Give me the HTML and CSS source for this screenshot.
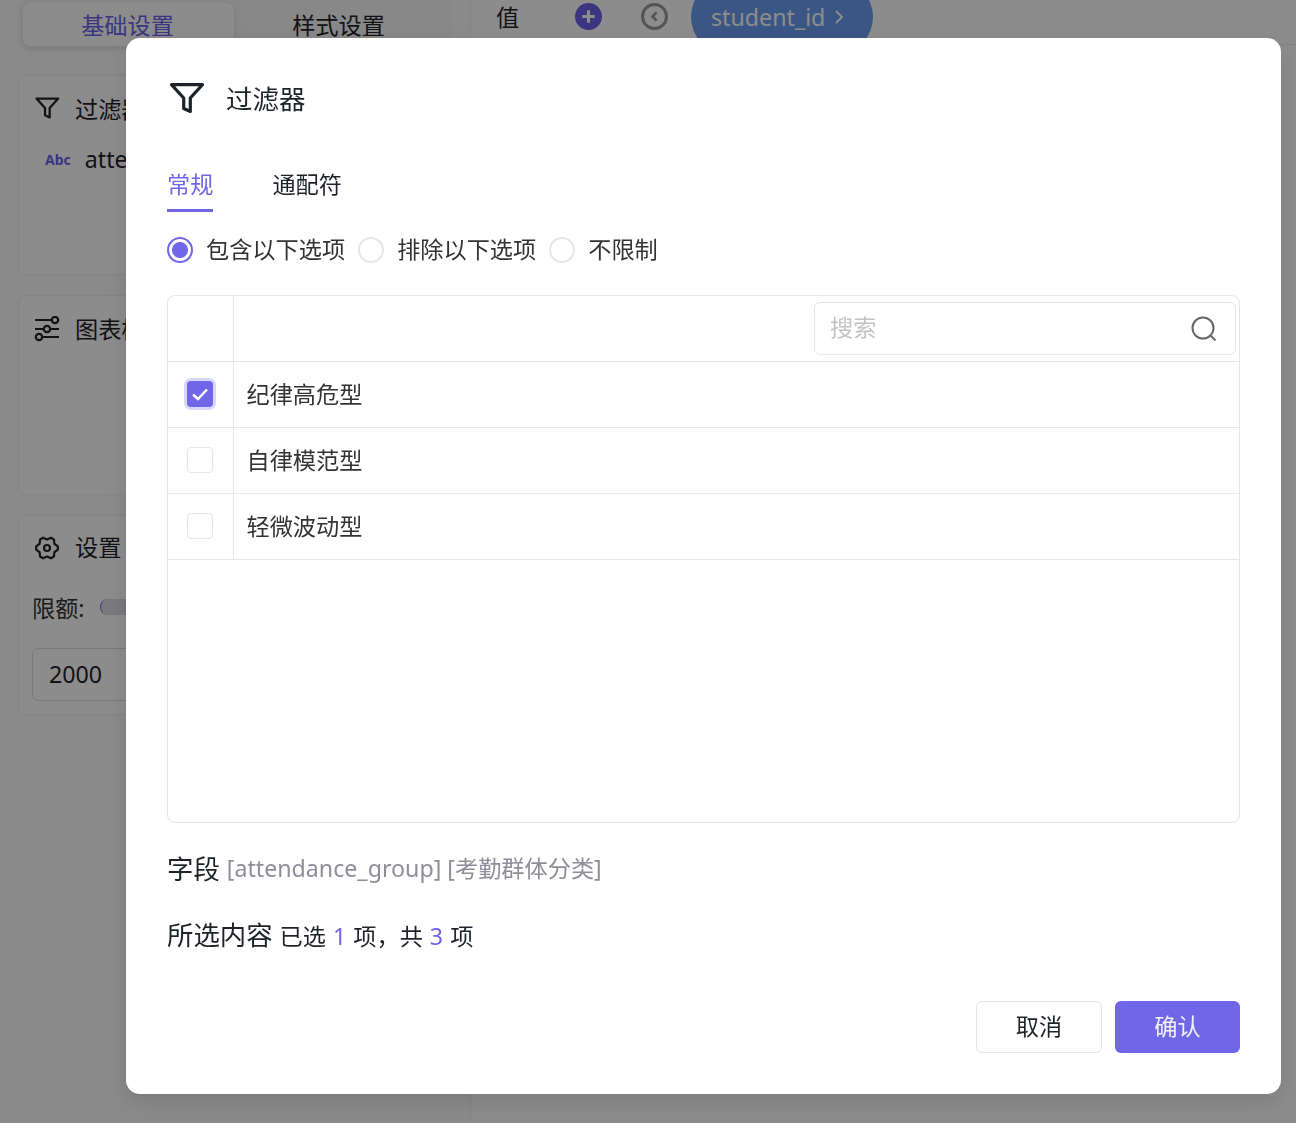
FILE: index.html
```html
<!DOCTYPE html>
<html lang="zh">
<head>
    <meta charset="UTF-8">
    <title>过滤器</title>
    <link rel="stylesheet" href="styles.css">
</head>
<body>
    <!-- Page behind the dialog -->
    <div class="app">
        <aside class="sidebar">
            <div class="side-tabs">
                <div class="side-tab active">基础设置</div>
                <div class="side-tab">样式设置</div>
            </div>
            <section class="card">
                <div class="card-head">
                    <svg class="card-icon funnel" viewBox="0 0 37 37"><polygon points="3.5 3.7 34.5 3.7 22.3 17 22.3 30.5 15.7 27.5 15.7 17"/></svg>
                    <span>过滤器</span>
                </div>
                <div class="field-row"><span class="abc">Abc</span><span>atte</span></div>
            </section>
            <section class="card">
                <div class="card-head">
                    <svg class="card-icon" viewBox="0 0 26 26"><path d="M1 4H17M1 13H9M17 13H25M9 21H25"/><circle cx="21" cy="4" r="3.2"/><circle cx="13" cy="13" r="3.2"/><circle cx="5" cy="21" r="3.2"/></svg>
                    <span>图表样式</span>
                </div>
            </section>
            <section class="card">
                <div class="card-head settings-head">
                    <svg class="card-icon" viewBox="-1 -1 26 26"><polygon points="22.86 10.28 22.86 13.72 19.36 16.25 18.92 20.55 15.94 22.27 12 20.5 8.06 22.27 5.08 20.55 4.64 16.25 1.14 13.72 1.14 10.28 4.64 7.75 5.08 3.45 8.06 1.73 12 3.5 15.94 1.73 18.92 3.45 19.36 7.75"/><circle cx="12" cy="12" r="3"/></svg>
                    <span>设置</span>
                </div>
                <div class="limit-row"><span>限额:</span><div class="switch"></div></div>
                <div class="limit-input">2000</div>
            </section>
        </aside>
        <main class="main">
            <div class="value-bar">
                <span class="value-label">值</span>
                <span class="add-btn">
                    <svg viewBox="0 0 26 26"><path d="M13 7V19M7 13H19"/></svg>
                </span>
                <span class="back-btn">
                    <svg viewBox="0 0 26 26"><path d="M15 9L11 13L15 17"/></svg>
                </span>
                <span class="pill">student_id
                    <svg viewBox="0 0 14 18"><path d="M4 3L10 9L4 15"/></svg>
                </span>
            </div>
        </main>
    </div>

    <!-- Filter dialog -->
    <div class="overlay">
        <div class="modal">
            <div class="modal-title">
                <svg class="title-icon" viewBox="0 0 37 37"><polygon points="3.5 3.7 34.5 3.7 22.3 17 22.3 30.5 15.7 27.5 15.7 17"/></svg>
                <span>过滤器</span>
            </div>

            <div class="tabs">
                <div class="tab active">常规</div>
                <div class="tab">通配符</div>
            </div>

            <div class="radios">
                <label class="radio checked"><i></i>包含以下选项</label>
                <label class="radio"><i></i>排除以下选项</label>
                <label class="radio"><i></i>不限制</label>
            </div>

            <div class="list">
                <div class="list-row">
                    <div class="check-cell"></div>
                    <div class="text-cell search-cell">
                        <div class="search">
                            <span>搜索</span>
                            <svg viewBox="0 0 26 26"><circle cx="12" cy="12" r="10.5"/><path d="M20 20L24.5 24.5"/></svg>
                        </div>
                    </div>
                </div>
                <div class="list-row">
                    <div class="check-cell">
                        <span class="checkbox checked">
                            <svg viewBox="0 0 26 26"><path d="M6 13.5L11 18L20 8.5"/></svg>
                        </span>
                    </div>
                    <div class="text-cell">纪律高危型</div>
                </div>
                <div class="list-row">
                    <div class="check-cell"><span class="checkbox"></span></div>
                    <div class="text-cell">自律模范型</div>
                </div>
                <div class="list-row">
                    <div class="check-cell"><span class="checkbox"></span></div>
                    <div class="text-cell">轻微波动型</div>
                </div>
            </div>

            <div class="info field-info">
                <span class="info-label">字段</span>
                <span class="muted">[attendance_group] [考勤群体分类]</span>
            </div>
            <div class="info selected-info">
                <span class="info-label">所选内容</span>
                <span class="count">已选 <b>1</b> 项，共 <b>3</b> 项</span>
            </div>

            <div class="actions">
                <button class="btn">取消</button>
                <button class="btn primary">确认</button>
            </div>
        </div>
    </div>
</body>
</html>
```

FILE: styles.css
```css
html, body {
    margin: 0;
    height: 100%;
    overflow: hidden;
}

body {
    font-family: "Noto Sans", "Noto Sans CJK SC", sans-serif;
    font-size: 23.2px;
    color: #1f2329;
    background-color: #fff;
}

.app {
    display: flex;
    height: 100vh;
}

/* Sidebar behind the dialog */
.sidebar {
    box-sizing: border-box;
    width: 471px;
    padding: 0 18px;
    border-right: 1px solid #eee;
    background-color: #fcfcfc;
}

.side-tabs {
    display: flex;
    height: 54px;
    margin: -4px 0 25px;
    padding: 7px 5px 4px;
    box-sizing: border-box;
    border-radius: 8px;
    background-color: #f7f7f9;
}

.side-tab {
    box-sizing: border-box;
    width: 211px;
    padding-right: 2px;
    text-align: center;
    line-height: 45px;
}

.side-tab.active {
    color: #6c63e8;
    background-color: #fff;
    border-radius: 8px;
    box-shadow: 0 3px 8px rgba(0, 0, 0, 0.1);
}

.card {
    box-sizing: border-box;
    height: 200px;
    margin-bottom: 20px;
    padding: 16px 15px;
    border: 1px solid #f0f0f0;
    border-radius: 8px;
    background-color: #fff;
}

.card-head {
    display: flex;
    align-items: center;
    gap: 15px;
    height: 34px;
}

.card-head span {
    margin-bottom: 3px;
}

.settings-head {
    margin-top: -1px;
}

.settings-head span {
    margin-bottom: 5px;
}

.card-icon {
    width: 26px;
    height: 26px;
    fill: none;
    stroke: #1f2329;
    stroke-width: 2.2;
    stroke-linejoin: round;
}

.card-icon.funnel {
    stroke-width: 3.2;
}

.field-row {
    display: flex;
    align-items: center;
    gap: 14px;
    margin: 17px 0 0 11px;
}

.abc {
    color: #6c63e8;
    font-size: 14px;
    font-weight: 700;
}

.limit-row {
    display: flex;
    align-items: center;
    gap: 15px;
    margin: 25px 0 0 -2px;
    color: #333;
}

.switch {
    width: 60px;
    height: 16px;
    border-left: 1px solid #6c63e8;
    border-radius: 8px;
    background-color: #dedee6;
}

.limit-input {
    box-sizing: border-box;
    height: 53px;
    margin-top: 24px;
    margin-left: -2px;
    padding-left: 16px;
    line-height: 51px;
    border: 1px solid #ddd;
    border-radius: 6px;
}

/* Top bar behind the dialog */
.main {
    flex: 1;
}

.value-bar {
    display: flex;
    align-items: center;
    box-sizing: border-box;
    height: 57px;
    margin-top: -12px;
    padding-left: 25px;
    border-bottom: 1px solid #eee;
}

.value-label {
    width: 79px;
}

.add-btn, .back-btn {
    display: flex;
    width: 27px;
    height: 27px;
    border-radius: 50%;
}

.add-btn {
    background-color: #6c63e8;
}

.add-btn svg, .back-btn svg {
    width: 27px;
    height: 27px;
    fill: none;
    stroke-width: 3;
    stroke: #fff;
}

.back-btn {
    box-sizing: border-box;
    margin-left: 39px;
    border: 3px solid #999;
}

.back-btn svg {
    margin: -3px;
    stroke: #999;
    stroke-width: 2.5;
}

.pill {
    display: flex;
    align-items: center;
    gap: 7px;
    height: 76px;
    margin-left: 23px;
    margin-top: 1px;
    padding: 0 27px 0 20px;
    border-radius: 38px;
    color: #fff;
    background-color: #6b9df0;
}

.pill svg {
    width: 14px;
    height: 18px;
    fill: none;
    stroke: #fff;
    stroke-width: 1.9;
}

/* Dialog */
.overlay {
    position: fixed;
    inset: 0;
    display: flex;
    box-sizing: border-box;
    padding: 38px 15px 29px 126px;
    background-color: rgba(0, 0, 0, 0.45);
}

.modal {
    flex: 1;
    box-sizing: border-box;
    padding: 41px;
    border-radius: 14px;
    background-color: #fff;
    box-shadow: 0 8px 24px rgba(0, 0, 0, 0.12);
}

.modal-title {
    display: flex;
    align-items: center;
    gap: 21px;
    height: 40px;
    font-size: 26.5px;
}

.modal-title span {
    margin-bottom: 4px;
}

.title-icon {
    width: 37px;
    height: 37px;
    margin-left: 1px;
    fill: none;
    stroke: #1f2329;
    stroke-width: 3.2;
    stroke-linejoin: round;
}

.tabs {
    display: flex;
    gap: 59px;
    margin-top: 50px;
}

.tab {
    height: 43px;
    line-height: 30px;
}

.tab.active {
    color: #6f66e8;
    border-bottom: 3px solid #6f66e8;
    box-sizing: content-box;
    height: 40px;
}

.radios {
    display: flex;
    gap: 13px;
    margin-top: 25px;
    color: #333;
}

.radio {
    display: flex;
    align-items: flex-start;
    gap: 13px;
    height: 26px;
    line-height: 24px;
}

.radio i {
    box-sizing: border-box;
    width: 26px;
    height: 26px;
    border: 2px solid #e5e6eb;
    border-radius: 50%;
}

.radio.checked i {
    border-color: #6f66e8;
    background: radial-gradient(circle, #6f66e8 0 7.5px, #fff 8.5px);
}

.list {
    box-sizing: border-box;
    height: 528px;
    margin-top: 32px;
    border: 1px solid #e5e6eb;
    border-radius: 8px;
}

.list-row {
    display: flex;
    box-sizing: border-box;
    height: 66px;
    border-bottom: 1px solid #e5e6eb;
}

.check-cell {
    display: flex;
    align-items: center;
    justify-content: center;
    box-sizing: border-box;
    width: 66px;
    padding: 0 1px 1px 0;
    border-right: 1px solid #e5e6eb;
}

.text-cell {
    flex: 1;
    display: flex;
    align-items: center;
    padding: 0 0 4px 12.5px;
    color: #333;
}

.search-cell {
    justify-content: flex-end;
    padding: 0 3px 0 0;
}

.search {
    display: flex;
    align-items: center;
    justify-content: space-between;
    box-sizing: border-box;
    width: 422px;
    height: 53px;
    padding: 0 18px 0 15px;
    border: 1px solid #e5e6eb;
    border-radius: 6px;
    color: #c4c4c4;
}

.search span {
    margin-bottom: 5px;
}

.search svg {
    width: 26px;
    height: 26px;
    fill: none;
    stroke: #666;
    stroke-width: 2;
}

.checkbox {
    display: flex;
    box-sizing: border-box;
    width: 26px;
    height: 26px;
    border: 1px solid #e5e6eb;
    border-radius: 4px;
}

.checkbox.checked {
    border: 0;
    background-color: #6f66e8;
    box-shadow: 0 0 0 3px #d9d6fa;
}

.checkbox svg {
    width: 26px;
    height: 26px;
    fill: none;
    stroke: #fff;
    stroke-width: 2.4;
}

.info {
    display: flex;
    align-items: center;
    gap: 7px;
}

.field-info {
    margin-top: 25px;
}

.selected-info {
    margin-top: 25px;
}

.info-label {
    font-size: 26.4px;
    margin-bottom: 2px;
}

.muted {
    margin-bottom: 4px;
    color: #8e8e99;
}

.count {
    word-spacing: 1px;
}

.info b {
    font-weight: 400;
    color: #6f66e8;
}

.actions {
    display: flex;
    justify-content: flex-end;
    gap: 13px;
    margin-top: 46px;
}

.btn {
    width: 126px;
    height: 52px;
    padding: 0 0 4px;
    font: inherit;
    color: #1f2329;
    border: 1px solid #e5e6eb;
    border-radius: 6px;
    background-color: #fff;
}

.btn.primary {
    width: 125px;
    color: #f2f2f2;
    border: 0;
    background-color: #6f66e8;
}
```
